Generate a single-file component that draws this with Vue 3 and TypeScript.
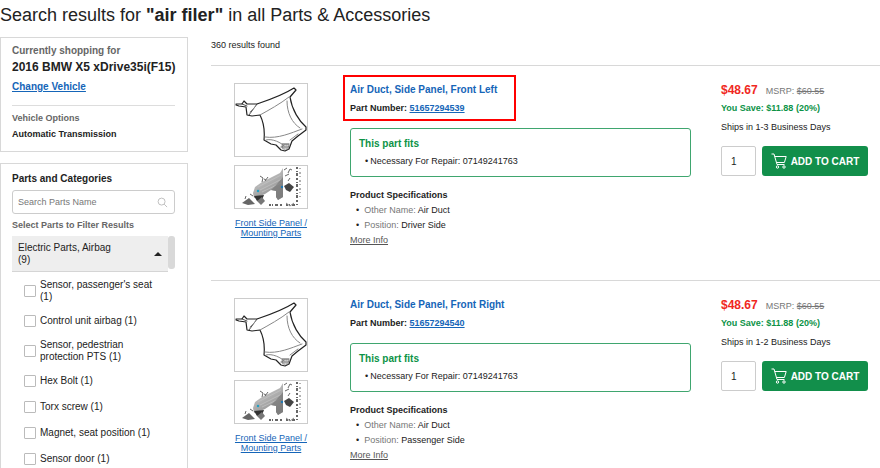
<script setup lang="ts">
interface Product {
  title: string
  partNumber: string
  repairFor: string
  position: string
  price: string
  msrp: string
  save: string
  ships: string
  highlighted: boolean
}

const categories: string[] = [
  "Sensor, passenger's seat (1)",
  'Control unit airbag (1)',
  'Sensor, pedestrian protection PTS (1)',
  'Hex Bolt (1)',
  'Torx screw (1)',
  'Magnet, seat position (1)',
  'Sensor door (1)',
]

const products: Product[] = [
  {
    title: 'Air Duct, Side Panel, Front Left',
    partNumber: '51657294539',
    repairFor: '07149241763',
    position: 'Driver Side',
    price: '$48.67',
    msrp: '$60.55',
    save: '$11.88 (20%)',
    ships: 'Ships in 1-3 Business Days',
    highlighted: true,
  },
  {
    title: 'Air Duct, Side Panel, Front Right',
    partNumber: '51657294540',
    repairFor: '07149241763',
    position: 'Passenger Side',
    price: '$48.67',
    msrp: '$60.55',
    save: '$11.88 (20%)',
    ships: 'Ships in 1-2 Business Days',
    highlighted: false,
  },
]
</script>

<template>
  <div class="page">
    <h1>Search results for <b>"air filer"</b> in all Parts &amp; Accessories</h1>
    <div class="columns">
      <aside>
        <section class="panel vehicle">
          <p class="shopping">Currently shopping for</p>
          <p class="car">2016 BMW X5 xDrive35i(F15)</p>
          <a class="change" href="#">Change Vehicle</a>
          <div class="options">
            <p class="muted">Vehicle Options</p>
            <p class="option">Automatic Transmission</p>
          </div>
        </section>

        <section class="panel filters">
          <h2>Parts and Categories</h2>
          <div class="search">
            <input type="text" placeholder="Search Parts Name" aria-label="Search Parts Name" />
            <svg viewBox="0 0 12 12" aria-hidden="true">
              <circle cx="5" cy="5" r="3.8" />
              <path d="M7.8 7.8L11 11" />
            </svg>
          </div>
          <p class="muted">Select Parts to Filter Results</p>
          <div class="scroller">
            <div class="group">
              <button class="group-head" type="button" aria-expanded="true">
                <span>Electric Parts, Airbag (9)</span>
                <i class="caret"></i>
              </button>
              <ul class="checks">
                <li v-for="name in categories" :key="name">
                  <label><input type="checkbox" /><span>{{ name }}</span></label>
                </li>
              </ul>
            </div>
            <div class="thumb"></div>
          </div>
        </section>
      </aside>

      <main>
        <p class="count">360 results found</p>
        <article v-for="p in products" :key="p.partNumber">
          <div class="media">
            <svg class="picture" viewBox="0 0 72 72" aria-hidden="true">
              <g fill="none" stroke-linejoin="round" stroke-linecap="round">
                <g stroke="#222" stroke-width="1.2">
                  <path d="M1 20L7 20L9 17L12 20L22 20C34 16 48 11 59 4L61 6L55 13C57 26 64 37 71 43L71 46L63 52L57 57L54 65L50 67L46 66L41 61L36 60L29 56C30 46 28 37 25 31L17 32L12 31L11 23L4 22L1 21" />
                  <path d="M22 20L14 31M7 20L12 22M46 63L53 63M47 60L54 60" stroke-width=".8" />
                </g>
                <g stroke="#888" stroke-width="1">
                  <path d="M25 31C34 26 45 20 54 13M52 17C52 29 57 39 65 44M30 53C43 55 56 49 67 45M31 56C37 54 47 59 49 62M55 56L63 50M15 28L21 22" />
                </g>
                <path d="M47 61L54 61L53 65L48 65Z" stroke="#777" stroke-dasharray="1 1" />
              </g>
            </svg>
            <svg class="picture diagram" viewBox="0 0 72 42" aria-hidden="true">
              <defs>
                <linearGradient :id="'metal' + p.partNumber" x1="0" y1="0" x2="0.6" y2="1">
                  <stop offset="0" stop-color="#ddd" />
                  <stop offset="1" stop-color="#8d8d8d" />
                </linearGradient>
              </defs>
              <path :fill="'url(#metal' + p.partNumber + ')'" d="M18 27L20 21L27 16L37 11L45 7L48 2L48 31L43 34L41 31L41 25L36 24L30 28L23 31L19 32Z" />
              <path d="M23 21L46 9M25 24L47 13M27 26L46 17" fill="none" stroke="#c4c4c4" stroke-width=".7" />
              <path d="M42 18L48 11L48 31L43 34L41 31L41 25L36 24Z" fill="#777" opacity=".7" />
              <path d="M7 37L14 32L20 38L13 39Z" fill="#666" />
              <path d="M19 30L29 29L27 34L22 35Z" fill="#333" />
              <path d="M22 35L27 31L30 35L26 39Z" fill="#777" />
              <path d="M49 20L54 17L59 21L55 26L51 24Z" fill="#444" />
              <g fill="none" stroke="#666" stroke-width="1">
                <path d="M27 16L28 12L25 10M30 15L33 11M29 13L31 14M18 30L15 28" />
                <path d="M49 4L52 2M53 7L55 3L57 4M50 10L54 8M55 12L53 15M10 33L11 30" />
                <path d="M62 1V40" stroke-width="2" stroke-dasharray="2 2 1 1 3 2" />
                <path d="M65 2V31" stroke-dasharray="1 3 2 2" />
                <path d="M34 39H48M51 39H61" stroke-width="2" stroke-dasharray="2 1 1 2 3 2" />
                <path d="M51 37L55 40L59 37" stroke="#888" />
              </g>
              <circle cx="23" cy="25" r="1.2" fill="#1fa0c4" />
              <circle cx="47" cy="21" r="1.2" fill="#1f78b4" />
            </svg>
            <a href="#">Front Side Panel / Mounting Parts</a>
          </div>

          <div class="details">
            <div class="heading" :class="{ marked: p.highlighted }">
              <h3><a href="#">{{ p.title }}</a></h3>
              <p>Part Number: <a href="#">{{ p.partNumber }}</a></p>
            </div>
            <div class="fits">
              <h4>This part fits</h4>
              <ul>
                <li>Necessary For Repair: {{ p.repairFor }}</li>
              </ul>
            </div>
            <h5>Product Specifications</h5>
            <ul class="specs">
              <li><span>Other Name:</span> Air Duct</li>
              <li><span>Position:</span> {{ p.position }}</li>
            </ul>
            <a class="more" href="#">More Info</a>
          </div>

          <div class="buy">
            <p class="prices"><strong>{{ p.price }}</strong><span>MSRP: <s>{{ p.msrp }}</s></span></p>
            <p class="save">You Save: {{ p.save }}</p>
            <p class="ships">{{ p.ships }}</p>
            <form class="order" @submit.prevent>
              <input type="text" value="1" aria-label="Quantity" />
              <button type="submit">
                <svg viewBox="0 0 16 16" aria-hidden="true">
                  <path d="M0.5 1H3L6 11.5H13.5M3.8 3.5H15.2L13.4 9.5H5.5" />
                  <circle cx="6.5" cy="14" r="1.2" />
                  <circle cx="13" cy="14" r="1.2" />
                </svg>
                <span>ADD TO CART</span>
              </button>
            </form>
          </div>
        </article>
      </main>
    </div>
  </div>
</template>

<style>
body {
  margin: 0;
  background: #fff;
}
</style>

<style scoped>
.page {
  height: 100vh;
  overflow: hidden;
  font-family: "Liberation Sans", Arial, sans-serif;
  font-size: 9px;
  line-height: 12px;
  color: #222;
}
h1, h2, h3, h4, h5, p, ul {
  margin: 0;
  padding: 0;
}
ul {
  list-style: none;
}
a {
  color: #1565b8;
}
input, button {
  box-sizing: border-box;
  font-family: inherit;
  color: inherit;
}
h1 {
  padding-top: 4px;
  font-size: 18px;
  line-height: 22px;
  font-weight: 400;
}
.columns {
  display: grid;
  grid-template-columns: 188px 1fr;
  column-gap: 23px;
  padding-top: 11px;
}
.panel {
  border: 1px solid #d8d8d8;
  padding: 0 12px 0 11px;
}
.vehicle {
  padding-top: 7px;
  padding-bottom: 11px;
  margin-bottom: 11px;
}
.shopping {
  font-size: 10px;
  font-weight: 700;
  color: #666;
}
.car {
  margin-top: 2px;
  font-size: 12px;
  line-height: 16px;
  font-weight: 700;
  white-space: nowrap;
}
.change {
  display: block;
  margin-top: 6px;
  font-size: 10px;
  font-weight: 700;
}
.options {
  margin-top: 12px;
  padding-top: 6px;
  border-top: 1px solid #ddd;
}
.muted {
  font-weight: 700;
  color: #666;
}
.option {
  margin-top: 4px;
  font-weight: 700;
}
.filters {
  padding-top: 9px;
  padding-bottom: 12px;
}
h2 {
  font-size: 10px;
  line-height: 12px;
}
.search {
  position: relative;
  margin: 5px 0;
}
.search input {
  display: block;
  width: 100%;
  height: 24px;
  padding: 0 24px 0 5px;
  border: 1px solid #ccc;
  border-radius: 3px;
  font-size: 9px;
}
.search input::placeholder {
  color: #777;
  opacity: 1;
}
.search svg {
  position: absolute;
  top: 7px;
  right: 7px;
  width: 11px;
  height: 11px;
  fill: none;
  stroke: #bbb;
}
.scroller {
  display: flex;
  margin-top: 5px;
}
.group {
  flex: 1;
}
.thumb {
  width: 7px;
  height: 33px;
  border-radius: 3px;
  background: #d9d9d9;
}
.group-head {
  display: flex;
  align-items: center;
  justify-content: space-between;
  width: 100%;
  height: 36px;
  padding: 0 6px;
  border: 0;
  border-bottom: 1px solid #d5d5d5;
  background: #eee;
  font-size: 10px;
  line-height: 12px;
  text-align: left;
}
.group-head span {
  width: 100px;
}
.caret {
  border: 4px solid transparent;
  border-top: 0;
  border-bottom-color: #222;
}
.checks {
  display: flex;
  flex-direction: column;
  gap: 10px;
  padding: 7px 8px 0 12px;
}
.checks label {
  display: flex;
  align-items: center;
  gap: 4px;
  min-height: 16px;
  font-size: 10px;
  line-height: 12px;
}
.checks input {
  appearance: none;
  flex: none;
  width: 12px;
  height: 12px;
  margin: 0;
  border: 1px solid #bbb;
  border-radius: 1px;
}
.count {
  padding-top: 2px;
  padding-bottom: 14px;
}
article {
  display: grid;
  grid-template-columns: 74px 1fr 147px;
  padding: 17px 12px 34px 23px;
  border-top: 1px solid #d8d8d8;
}
.media {
  text-align: center;
  line-height: 10px;
}
.picture {
  display: block;
  width: 72px;
  height: 72px;
  border: 1px solid #ccc;
}
.diagram {
  height: 42px;
  margin: 8px 0 9px;
}
.details {
  margin: 0 30px 0 42px;
}
.heading {
  position: relative;
}
.marked::after {
  content: "";
  position: absolute;
  top: -8px;
  left: -7px;
  width: 169px;
  height: 42px;
  border: 2px solid #f00;
  pointer-events: none;
}
h3 {
  font-size: 10px;
  line-height: 14px;
}
h3 a {
  text-decoration: none;
}
.heading p {
  margin-top: 5px;
  font-weight: 700;
}
.fits {
  margin-top: 14px;
  padding: 8px 8px 9px;
  border: 1px solid #3fa66f;
  border-radius: 3px;
}
h4 {
  font-size: 10px;
  line-height: 14px;
  color: #0c9347;
}
.fits ul {
  margin-top: 4px;
  padding-left: 6px;
}
.fits li::before {
  content: "•";
  margin-right: 2px;
}
h5 {
  margin-top: 12px;
  font-size: 9px;
  line-height: 12px;
}
.specs {
  display: grid;
  gap: 3px;
  margin-top: 3px;
  padding-left: 6px;
}
.specs li::before {
  content: "•";
  margin-right: 5px;
}
.specs span {
  color: #777;
}
.more {
  display: inline-block;
  margin-top: 3px;
  color: #555;
}
.prices {
  display: flex;
  align-items: baseline;
  gap: 8px;
  line-height: 14px;
  color: #777;
}
.prices strong {
  font-size: 12px;
  color: #f0281e;
}
.save {
  margin-top: 4px;
  font-weight: 700;
  color: #0c9347;
}
.ships {
  margin-top: 7px;
}
.order {
  display: flex;
  gap: 6px;
  margin-top: 13px;
}
.order input {
  width: 35px;
  height: 30px;
  padding: 0 9px;
  border: 1px solid #ccc;
  border-radius: 2px;
  font-size: 10px;
}
.order button {
  flex: 1;
  display: flex;
  align-items: center;
  justify-content: center;
  gap: 4px;
  height: 30px;
  padding: 0;
  border: 0;
  border-radius: 3px;
  background: #128f4b;
  color: #fff;
  font-size: 10px;
  font-weight: 700;
}
.order svg {
  width: 16px;
  height: 16px;
  fill: none;
  stroke: #fff;
}
</style>
